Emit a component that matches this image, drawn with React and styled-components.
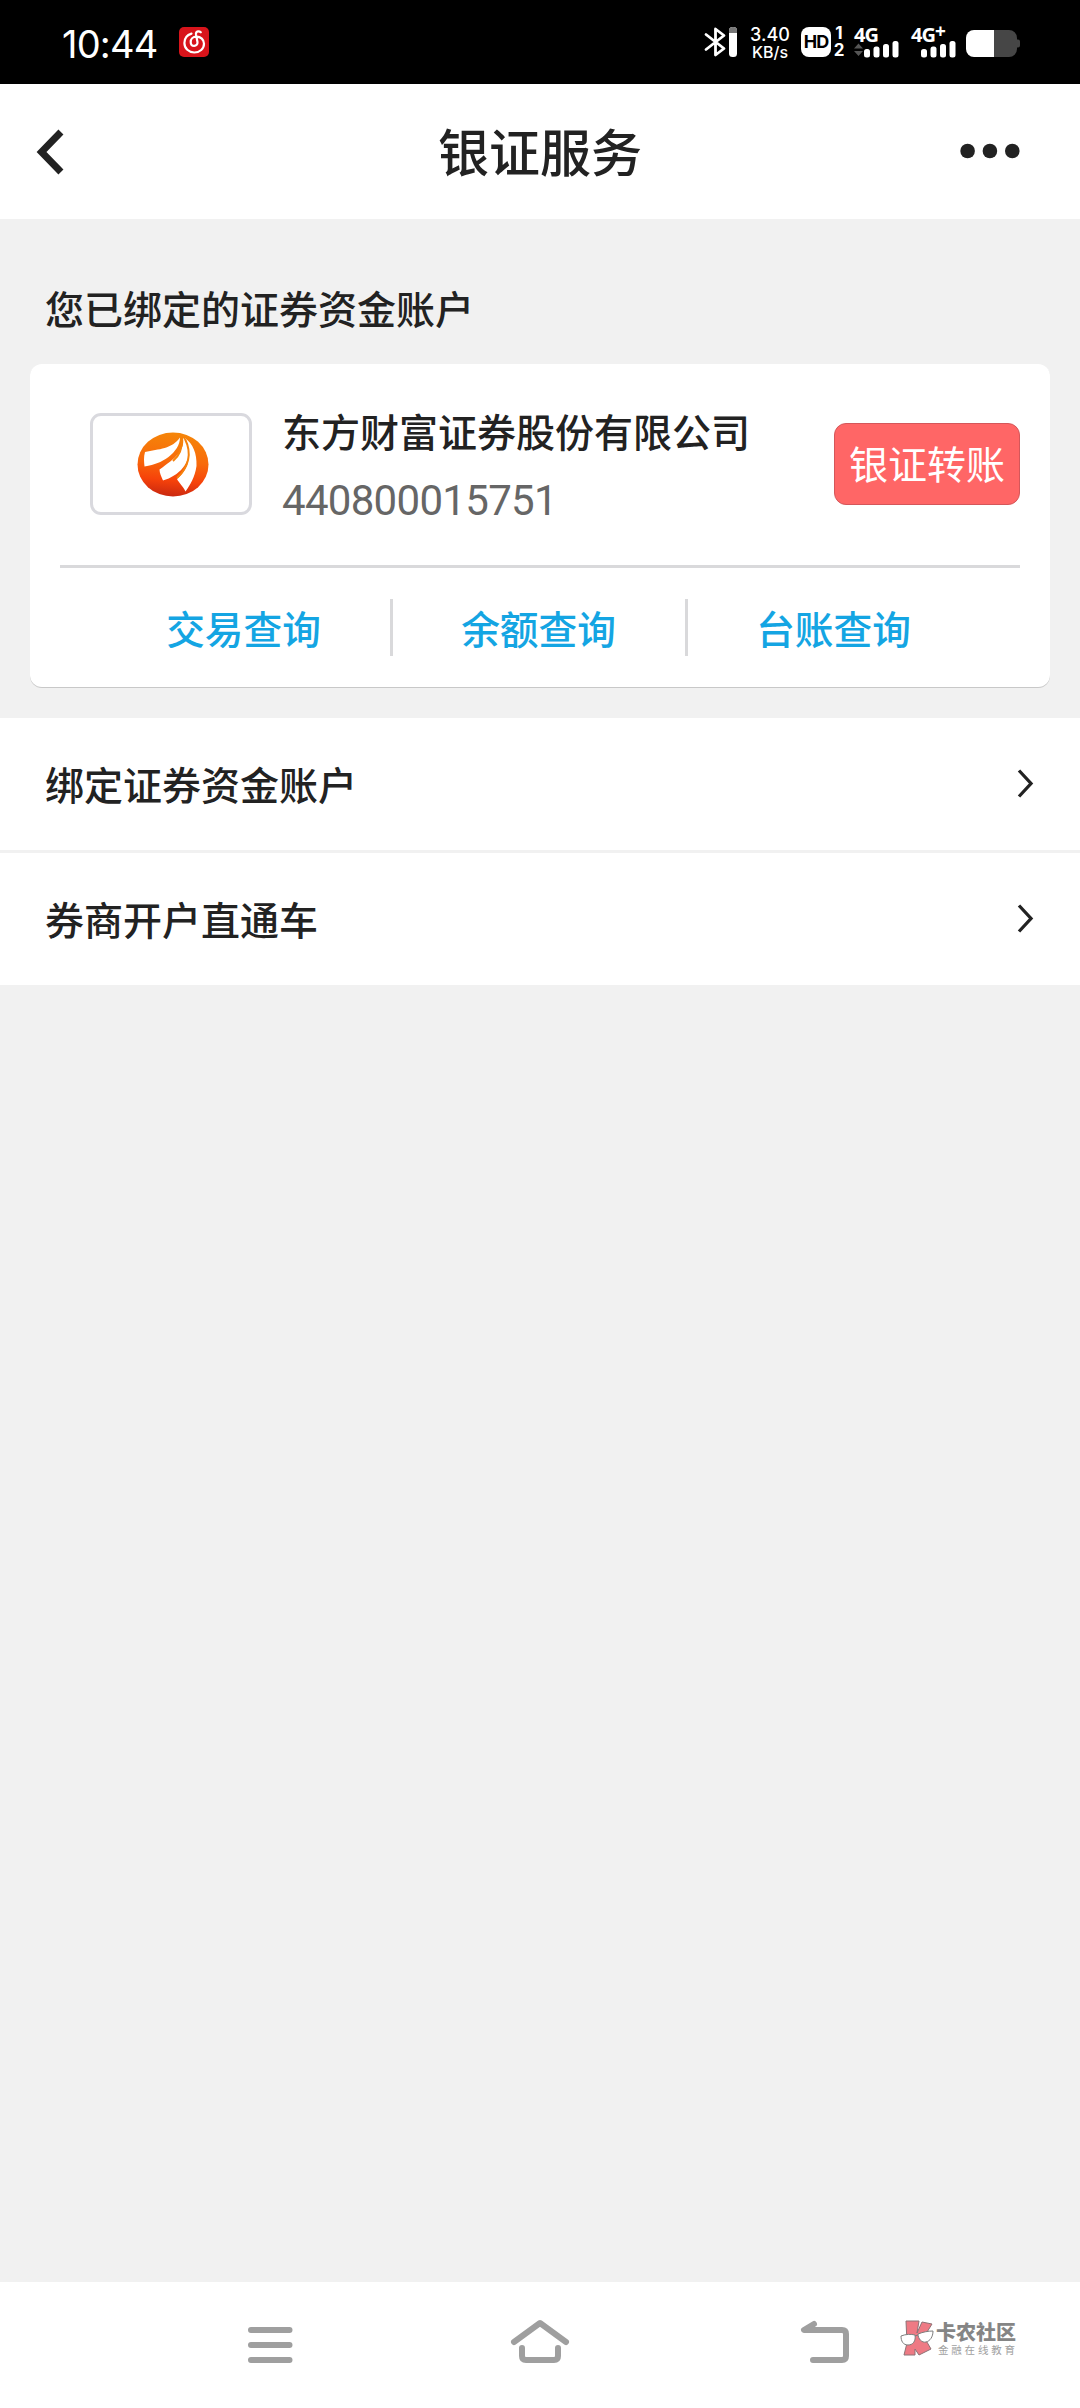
import styled, { createGlobalStyle } from "styled-components";

const GlobalStyle = createGlobalStyle`
	* {
		box-sizing: border-box;
	}

	body {
		margin: 0;
		background: #f1f1f1;
		font-family: Roboto, "Noto Sans CJK SC", sans-serif;
		color: #222;
	}

	svg {
		display: block;
		flex: none;
	}
`;

const Screen = styled.div`
	display: flex;
	flex-direction: column;
	width: 1080px;
	height: 2408px;
	overflow: hidden;
`;

const StatusBar = styled.div`
	display: flex;
	align-items: flex-start;
	height: 84px;
	padding: 27px 60px 0 62px;
	background: #000;
	color: #fff;
`;

const Time = styled.span`
	width: 117px;
	font-family: Inter, sans-serif;
	font-size: 38px;
	line-height: 35px;
	letter-spacing: -0.8px;
	white-space: nowrap;
`;

const StatusIcons = styled.div`
	display: flex;
	align-items: flex-start;
	margin-left: auto;
`;

const Speed = styled.div`
	width: 50px;
	margin-left: 8px;
	font-family: Inter, sans-serif;
	font-weight: 500;
	text-align: center;
	line-height: 16px;
`;

const SpeedValue = styled.div`
	font-size: 18px;
	line-height: 15px;
`;

const SpeedUnit = styled.div`
	margin-top: 2px;
	font-size: 16px;
	line-height: 16px;
`;

const HdBadge = styled.div`
	width: 30px;
	height: 30px;
	margin-left: 6px;
	border-radius: 8px;
	background: #fff;
	color: #000;
	font-family: Inter, sans-serif;
	font-size: 18px;
	font-weight: 700;
	letter-spacing: -1px;
	line-height: 30px;
	text-align: center;
`;

const SimNumbers = styled.div`
	display: flex;
	flex-direction: column;
	align-items: center;
	width: 12px;
	margin-left: 2px;
	font-family: Inter, sans-serif;
	font-size: 17px;
	font-weight: 700;
	line-height: 13px;
	gap: 4px;
`;

const Signal = styled.div`
	display: flex;
	flex-direction: column;
	width: 48px;
	margin-left: ${(props) => props.$left}px;
`;

const SignalType = styled.span`
	display: flex;
	height: 14px;
	padding-left: 1px;
	font-family: "Open Sans", sans-serif;
	font-size: 20px;
	font-weight: 700;
	line-height: 15px;
	letter-spacing: -1px;
	white-space: nowrap;
`;

const Plus = styled.span`
	font-size: 19px;
	line-height: 9px;
`;

const Battery = styled.div`
	margin: 3px 0 0 8px;
`;

const TitleBar = styled.header`
	display: grid;
	grid-template-columns: 120px 1fr 120px;
	align-items: center;
	height: 135px;
	background: #fff;
`;

const Title = styled.h1`
	margin: 7px 0 0;
	font-size: 51px;
	font-weight: 500;
	line-height: 60px;
	text-align: center;
`;

const Content = styled.main`
	flex: 1;
`;

const SectionLabel = styled.h2`
	margin: 0;
	padding: 65px 45px 25px;
	font-size: 39px;
	font-weight: 500;
	line-height: 55px;
`;

const Card = styled.section`
	height: 323px;
	margin: 0 30px 31px;
	padding: 0 30px;
	border-radius: 12px;
	background: #fff;
	box-shadow: 0 1px 0 #c8c8c8;
`;

const Account = styled.div`
	display: flex;
	align-items: center;
	height: 204px;
	padding: 0 0 1px 30px;
	border-bottom: 3px solid #d9d9db;
`;

const LogoBox = styled.div`
	display: flex;
	align-items: center;
	justify-content: center;
	width: 162px;
	height: 102px;
	padding-left: 3px;
	border: 3px solid #d9d9de;
	border-radius: 11px;
`;

const AccountInfo = styled.div`
	margin: 7px 0 0 30px;
`;

const Company = styled.div`
	font-size: 39px;
	font-weight: 500;
	line-height: 56px;
`;

const AccountNo = styled.div`
	margin-top: 11px;
	color: #666;
	font-size: 42px;
	line-height: 56px;
	letter-spacing: -0.7px;
`;

const TransferButton = styled.button`
	width: 186px;
	height: 82px;
	margin-left: auto;
	padding: 0 0 4px;
	border: 1px solid #d4575a;
	border-radius: 12px;
	background: #ff6666;
	color: #fff;
	font-family: inherit;
	font-size: 39px;
	white-space: nowrap;
`;

const Queries = styled.div`
	display: grid;
	grid-template-columns: repeat(3, 295px);
	justify-content: center;
	padding-top: 31px;
`;

const Query = styled.a`
	height: 57px;
	border-right: 3px solid ${(props) => (props.$last ? "transparent" : "#d9d9db")};
	color: #14a5e3;
	font-size: 38.7px;
	font-weight: 500;
	line-height: 63px;
	text-align: center;
`;

const MenuRow = styled.div`
	display: flex;
	align-items: center;
	justify-content: space-between;
	height: 132px;
	margin-bottom: 3px;
	padding: 0 46px 0 45px;
	background: #fff;
	font-size: 39px;
	font-weight: 500;
`;

const MenuText = styled.span`
	margin-bottom: 3px;
`;

const NavBar = styled.nav`
	display: flex;
	height: 126px;
	padding: 36px 0 0 247px;
	background: #fff;
`;

const NavItem = styled.div`
	width: ${(props) => props.$width}px;
`;

const Brand = styled.div`
	display: flex;
	gap: 2px;
	padding-top: 2px;
	color: #858585;
	white-space: nowrap;
`;

const BrandName = styled.div`
	margin-top: 3px;
	font-size: 20px;
	font-weight: 900;
	line-height: 20px;
`;

const BrandSub = styled.div`
	margin: 1px 0 0 2px;
	color: #a0a0a0;
	font-size: 10.5px;
	letter-spacing: 2.8px;
	line-height: 14px;
`;

const MusicIcon = () => (
	<svg width="30" height="30" viewBox="0 0 30 30">
		<rect width="30" height="30" rx="5" fill="#d8141b" />
		<path
			d="M12.5 6.600C8 8 5.400 11.500 5.400 16c0 5.500 4.400 9.500 9.900 9.500s9.700-3.800 9.700-8.700c0-4.200-3.300-7.200-7.500-7.200-3.700 0-5.800 2.500-5.800 5.300 0 2.500 1.500 4 3.500 4s3.500-1.600 3.300-3.700L17 7.500c-.3-2 .7-3 2-3.200 1-.1 2 .2 2.800 1"
			fill="none"
			stroke="#fff"
			strokeWidth="2.200"
			strokeLinecap="round"
		/>
	</svg>
);

const BluetoothIcon = () => (
	<svg width="34" height="30" viewBox="0 0 34 30">
		<path
			d="M3 7.500l18 14-8.500 6.500V2L21 8.500l-18 14"
			fill="none"
			stroke="#fff"
			strokeWidth="2.800"
			strokeLinecap="round"
			strokeLinejoin="round"
		/>
		<rect x="26" y="0" width="8" height="30" rx="3.500" fill="#fff" />
		<path d="M26 6V3.500A3.500 3.500 0 0 1 29.500 0h1A3.500 3.500 0 0 1 34 3.500V6z" fill="#777" />
	</svg>
);

const SignalBars = ({ arrows }) => (
	<svg width="48" height="17" viewBox="0 0 48 17">
		{arrows && <path d="M1 7.500L5.500 2.500 10 7.500zM1 10h9l-4.500 5z" fill="#555" />}
		<rect x="11" y="8" width="6" height="8.500" rx="2.500" fill="#fff" />
		<rect x="20.500" y="5.500" width="6" height="11" rx="2.500" fill="#fff" />
		<rect x="30" y="3" width="6" height="13.500" rx="2.500" fill="#fff" />
		<rect x="39.500" y="0" width="6" height="16.500" rx="2.500" fill="#fff" />
	</svg>
);

const BatteryIcon = () => (
	<svg width="54" height="27" viewBox="0 0 54 27">
		<path d="M28 0h15a8 8 0 0 1 8 8v1.500h1a2 2 0 0 1 2 2v4a2 2 0 0 1-2 2h-1V19a8 8 0 0 1-8 8H28z" fill="#464646" />
		<path d="M8 0h20v27H8a8 8 0 0 1-8-8V8a8 8 0 0 1 8-8z" fill="#fff" />
	</svg>
);

const BackIcon = () => (
	<svg width="66" height="60" viewBox="0 0 66 60">
		<path d="M58.500 12.500L41.500 30l17 17.500" fill="none" stroke="#222" strokeWidth="7" strokeLinecap="square" />
	</svg>
);

const MoreIcon = () => (
	<svg width="60" height="18" viewBox="0 0 60 18">
		<circle cx="7.600" cy="8" r="7.300" fill="#222" />
		<circle cx="29.900" cy="8" r="7.300" fill="#222" />
		<circle cx="52.300" cy="8" r="7.300" fill="#222" />
	</svg>
);

const BrokerLogo = () => (
	<svg width="72" height="65" viewBox="0 0 72 65">
		<defs>
			<linearGradient id="broker" x1="0.55" y1="0" x2="0.45" y2="1">
				<stop offset="0" stopColor="#f58609" />
				<stop offset="0.45" stopColor="#f86a0b" />
				<stop offset="0.75" stopColor="#f6420a" />
				<stop offset="1" stopColor="#c92810" />
			</linearGradient>
		</defs>
		<ellipse cx="36" cy="32.500" rx="35.500" ry="32" fill="url(#broker)" />
		<path d="M43 5.500C35 17 22 17 8 20c-1.500 5-1 10-.500 14.500 11-2 16-4 24-9.500C38 20 43 13 43 5.500z" fill="#fff" />
		<path d="M46 6c2 12-7 20-23.500 31.500 0 4 2 7 3.500 11C42 44 54 31 52 14.500 50 10 48 8 46 6z" fill="#fff" />
		<path d="M48 6c8 6 12 15 11.500 28C58 45 53 53 48.500 59.500 46 54 42 51 40 47c13-11 15-26 8-41z" fill="#fff" />
		<path d="M45 6c.5 10-3 18-9 23M48 7c7 14 4 28-8 39" fill="none" stroke="#f5820b" strokeWidth="2" />
	</svg>
);

const ArrowIcon = () => (
	<svg width="18" height="32" viewBox="0 0 18 32">
		<path d="M3 2.500L15 15.500 3 28.500" fill="none" stroke="#222" strokeWidth="3.300" />
	</svg>
);

const navStroke = {
	fill: "none",
	stroke: "#9f9f9f",
	strokeWidth: 6,
	strokeLinecap: "round",
	strokeLinejoin: "round",
};

const RecentsIcon = () => (
	<svg width="46" height="50" viewBox="0 0 46 50">
		<path d="M4 12h38.500M4 27h38.500M4 42h38.500" {...navStroke} />
	</svg>
);

const HomeIcon = () => (
	<svg width="60" height="50" viewBox="0 0 60 50">
		<path d="M4 24L30 5l26 19M12 30v8q0 4 4 4h28q4 0 4-4v-8" {...navStroke} />
	</svg>
);

const ReturnIcon = () => (
	<svg width="52" height="50" viewBox="0 0 52 50">
		<path d="M14 6L4 12h38q4 0 4 4v22q0 4-4 4H13" {...navStroke} />
	</svg>
);

const BrandIcon = () => (
	<svg width="34" height="37" viewBox="0 0 34 37">
		<g fill="#ee7a84" stroke="#8d7276" strokeWidth="1">
			<path d="M6 1h13l-2 12 5-11 10 2-8 13 7 12-12 6-4-6v6H4l3-12z" />
		</g>
		<path d="M1 16c5-2 10-2 14-1 1 6-2 10-7 10s-7-4-7-9zM18 14c5-2 10-3 15-3 0 6-3 10-7 11s-8-3-8-8z" fill="#fff" stroke="#7d7d7d" />
		<path d="M15 16l3-1" stroke="#7d7d7d" />
	</svg>
);

const queries = ["交易查询", "余额查询", "台账查询"];
const menu = ["绑定证券资金账户", "券商开户直通车"];

const App = () => {
	return (
		<>
			<GlobalStyle />
			<Screen>
				<StatusBar>
					<Time>10:44</Time>
					<MusicIcon />
					<StatusIcons>
						<BluetoothIcon />
						<Speed>
							<SpeedValue>3.40</SpeedValue>
							<SpeedUnit>KB/s</SpeedUnit>
						</Speed>
						<HdBadge>HD</HdBadge>
						<SimNumbers>
							<span>1</span>
							<span>2</span>
						</SimNumbers>
						<Signal $left={8}>
							<SignalType>4G</SignalType>
							<SignalBars arrows />
						</Signal>
						<Signal $left={9}>
							<SignalType>
								4G<Plus>+</Plus>
							</SignalType>
							<SignalBars />
						</Signal>
						<Battery>
							<BatteryIcon />
						</Battery>
					</StatusIcons>
				</StatusBar>

				<TitleBar>
					<BackIcon />
					<Title>银证服务</Title>
					<MoreIcon />
				</TitleBar>

				<Content>
					<SectionLabel>您已绑定的证券资金账户</SectionLabel>
					<Card>
						<Account>
							<LogoBox>
								<BrokerLogo />
							</LogoBox>
							<AccountInfo>
								<Company>东方财富证券股份有限公司</Company>
								<AccountNo>440800015751</AccountNo>
							</AccountInfo>
							<TransferButton>银证转账</TransferButton>
						</Account>
						<Queries>
							{queries.map((name, i) => (
								<Query key={name} $last={i === queries.length - 1}>
									{name}
								</Query>
							))}
						</Queries>
					</Card>
					{menu.map((name) => (
						<MenuRow key={name}>
							<MenuText>{name}</MenuText>
							<ArrowIcon />
						</MenuRow>
					))}
				</Content>

				<NavBar>
					<NavItem $width={263}>
						<RecentsIcon />
					</NavItem>
					<NavItem $width={290}>
						<HomeIcon />
					</NavItem>
					<NavItem $width={100}>
						<ReturnIcon />
					</NavItem>
					<Brand>
						<BrandIcon />
						<div>
							<BrandName>卡农社区</BrandName>
							<BrandSub>金融在线教育</BrandSub>
						</div>
					</Brand>
				</NavBar>
			</Screen>
		</>
	);
};

export default App;
